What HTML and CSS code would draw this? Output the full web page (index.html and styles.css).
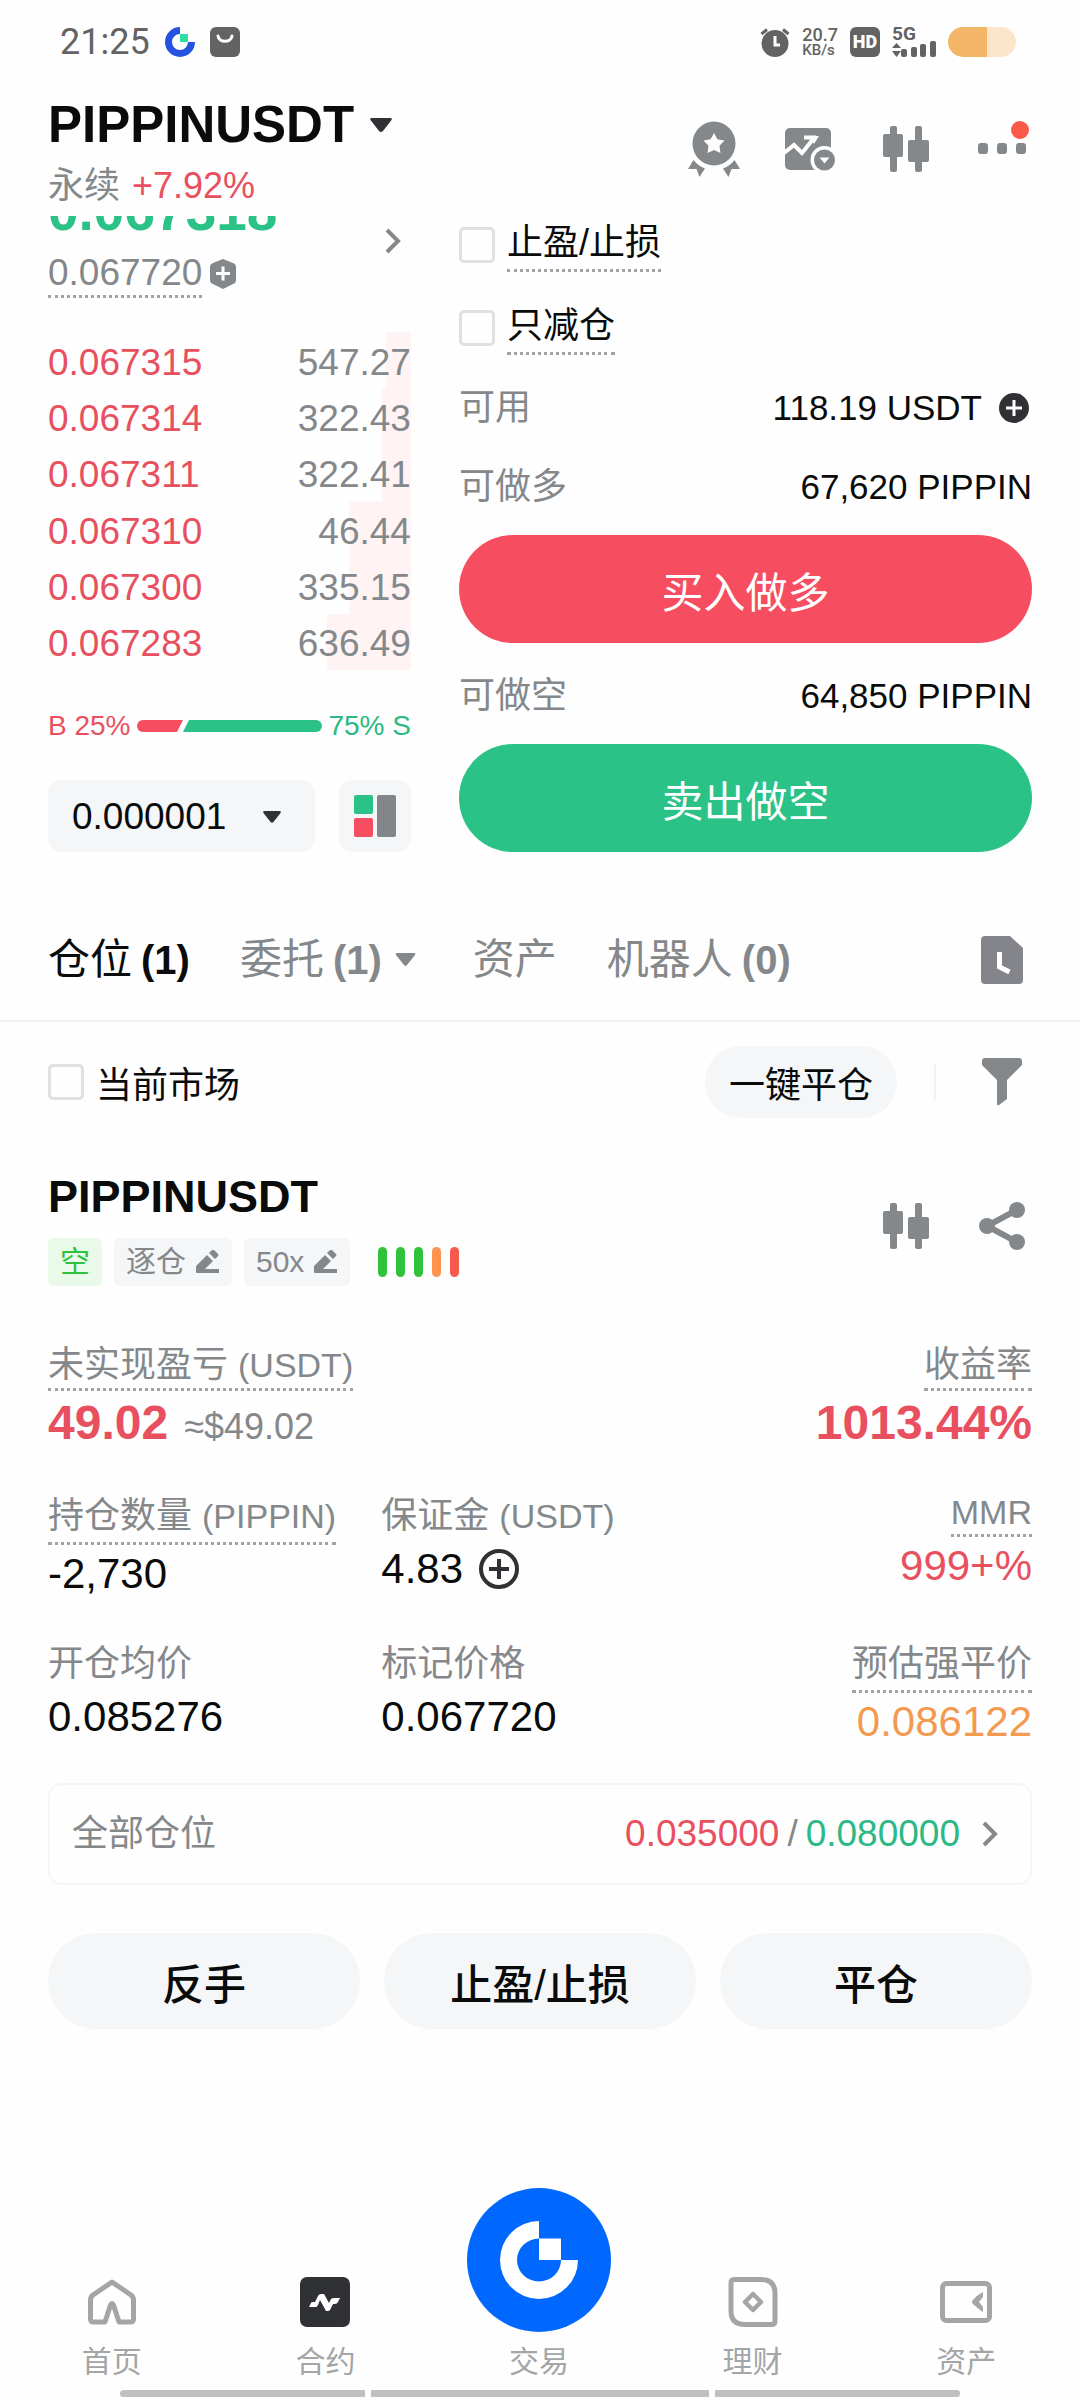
FILE: index.html
```html
<!DOCTYPE html>
<html lang="zh-CN">

<head>
    <meta charset="UTF-8" />
    <meta name="viewport" content="width=device-width, initial-scale=1.0" />
    <link rel="stylesheet" href="styles.css">
    <title>PIPPINUSDT 永续</title>
</head>

<body>
    <div class="page">
        <div class="status-bar">
            <div class="status-left">
                <span class="time">21:25</span>
                <svg width="30" height="30" viewBox="0 0 30 30">
                    <path d="M15 0A15 15 0 1 0 30 15H23A8 8 0 1 1 15 7Z" fill="#2553e0" />
                    <path d="M15 7h8v8h-8z" fill="#2be0a0" />
                </svg>
                <svg width="30" height="30" viewBox="0 0 30 30">
                    <rect width="30" height="30" rx="6" fill="#636363" />
                    <path d="M8 9c1 7 13 7 14 0" fill="none" stroke="#fff" stroke-width="3" stroke-linecap="round" />
                </svg>
            </div>
            <div class="status-right">
                <svg width="30" height="30" viewBox="0 0 30 30">
                    <circle cx="15" cy="16.500" r="13.500" fill="#636363" />
                    <path d="M1.500 7L7 2.500M28.500 7L23 2.500" stroke="#636363" stroke-width="3" />
                    <path d="M15 9v9h5" fill="none" stroke="#fff" stroke-width="3" />
                </svg>
                <div class="net-speed">
                    <span class="net-value">20.7</span>
                    <span class="net-unit">KB/s</span>
                </div>
                <span class="hd">HD</span>
                <div class="signal">
                    <span class="signal-type">5G</span>
                    <svg width="44" height="30" viewBox="0 0 44 30" fill="#636363">
                        <path d="M0 21l4.500-5 4.500 5zM0 24l4.500 6 4.500-6z" />
                        <rect x="9" y="22" width="6" height="8" rx="2" />
                        <rect x="19" y="20" width="6" height="10" rx="2" />
                        <rect x="28" y="17" width="6" height="13" rx="2" />
                        <rect x="38" y="14" width="6" height="16" rx="2" />
                    </svg>
                </div>
                <div class="battery"></div>
            </div>
        </div>

        <header class="header">
            <div class="pair">
                <button type="button" class="pair-name">PIPPINUSDT
                    <svg width="24" height="16" viewBox="0 0 24 16"><path d="M2.500 1h19q2 0 1 2L14 14q-2 2-4 0L1.500 3q-1-2 1-2z" fill="#303135" /></svg>
                </button>
                <div class="pair-info"><span>永续</span><span class="red">+7.92%</span></div>
            </div>
            <div class="header-actions">
                <button type="button" class="icon-btn" aria-label="活动">
                    <svg width="54" height="56" viewBox="0 0 54 56" fill="#84888b">
                        <path fill-rule="evenodd" d="M27 0.500a21.500 22 0 1 1 0 44a21.500 22 0 1 1 0-44zM27 12l3.400 6.300 7.100 1.300-5 5.200.9 7.200-6.400-3.100-6.400 3.100.9-7.200-5-5.200 7.100-1.300z" />
                        <path d="M6.500 39Q11 45 18 47.500L12.500 56l-3-8L1 48zM47.500 39Q43 45 36 47.500L41.500 56l3-8L53 48z" />
                    </svg>
                </button>
                <button type="button" class="icon-btn" aria-label="行情">
                    <svg width="52" height="44" viewBox="0 0 52 44">
                        <rect x="1" y="1" width="46" height="42" rx="5" fill="#84888b" />
                        <path d="M0 26l10-8 8 8 12-15M20 10.500h12" fill="none" stroke="#fff" stroke-width="4" />
                        <path d="M26 9h9l-5 8z" fill="#fff" />
                        <circle cx="40.500" cy="33" r="14" fill="#fefefe" />
                        <circle cx="40.500" cy="33" r="10.500" fill="#84888b" />
                        <path d="M35.500 30.500h10l-5 6z" fill="#fff" />
                    </svg>
                </button>
                <button type="button" class="icon-btn" aria-label="K线">
                    <svg width="46" height="46" viewBox="0 0 46 46" fill="#84888b">
                        <rect x="7" width="7" height="46" rx="2" />
                        <rect y="8" width="20" height="23" rx="2" />
                        <rect x="32" width="7" height="46" rx="2" />
                        <rect x="25" y="14" width="21" height="22" rx="2" />
                    </svg>
                </button>
                <button type="button" class="icon-btn more" aria-label="更多">
                    <svg width="48" height="12" viewBox="0 0 48 12" fill="#84888b">
                        <rect width="10" height="11" rx="3" />
                        <rect x="19" width="10" height="11" rx="3" />
                        <rect x="38" width="10" height="11" rx="3" />
                    </svg>
                    <span class="dot"></span>
                </button>
            </div>
        </header>

        <main>
            <section class="trade">
                <div class="order-book">
                    <div class="quote">
                        <div>
                            <div class="last-price">0.067318</div>
                            <div class="mark-price">
                                <span class="dotted">0.067720</span>
                                <svg width="26" height="30" viewBox="0 0 26 30">
                                    <path d="M13 0l10 4q3 1 3 4v13q0 3-3 4l-10 5-10-5q-3-1-3-4V8q0-3 3-4z" fill="#84888b" />
                                    <path d="M13 7.500v14M6 14.500h14" stroke="#fff" stroke-width="3" />
                                </svg>
                            </div>
                        </div>
                        <svg class="chevron" width="16" height="26" viewBox="0 0 16 26"><path d="M2 2l11 11L2 24" /></svg>
                    </div>
                    <div class="book-rows">
                        <div class="book-row"><i class="depth" style="width: 7%"></i><span class="red">0.067315</span><span>547.27</span></div>
                        <div class="book-row"><i class="depth" style="width: 8%"></i><span class="red">0.067314</span><span>322.43</span></div>
                        <div class="book-row"><i class="depth" style="width: 8%"></i><span class="red">0.067311</span><span>322.41</span></div>
                        <div class="book-row"><i class="depth" style="width: 17%"></i><span class="red">0.067310</span><span>46.44</span></div>
                        <div class="book-row"><i class="depth" style="width: 17%"></i><span class="red">0.067300</span><span>335.15</span></div>
                        <div class="book-row"><i class="depth" style="width: 23%"></i><span class="red">0.067283</span><span>636.49</span></div>
                    </div>
                    <div class="ratio">
                        <span class="red">B 25%</span>
                        <div class="ratio-bar">
                            <i class="buy" style="width: 25%"></i>
                            <i class="sell" style="width: 75%"></i>
                        </div>
                        <span class="green">75% S</span>
                    </div>
                    <div class="book-tools">
                        <div class="precision">
                            <select aria-label="价格精度">
                                <option>0.000001</option>
                            </select>
                            <svg width="18" height="12" viewBox="0 0 18 12"><path d="M1.500 0h15q2 0 1 2l-7 9q-1.500 1.500-3 0l-7-9q-1-2 1-2z" fill="#303135" /></svg>
                        </div>
                        <button type="button" class="layout-btn" aria-label="盘口样式">
                            <svg width="42" height="42" viewBox="0 0 42 42">
                                <rect width="19" height="19" rx="2" fill="#2bc287" />
                                <rect y="23" width="19" height="19" rx="2" fill="#f74d60" />
                                <rect x="23" width="19" height="42" rx="2" fill="#84858a" />
                            </svg>
                        </button>
                    </div>
                </div>

                <form class="order-form">
                    <div class="check-row">
                        <input type="checkbox" id="tpsl" />
                        <label for="tpsl" class="dotted">止盈/止损</label>
                    </div>
                    <div class="check-row">
                        <input type="checkbox" id="reduce" />
                        <label for="reduce" class="dotted">只减仓</label>
                    </div>
                    <div class="info-row">
                        <span>可用</span>
                        <span class="info-value">118.19 USDT
                            <svg width="34" height="30" viewBox="0 0 34 30">
                                <circle cx="16" cy="15" r="15" fill="#303135" />
                                <path d="M16 7v16M8 15h16" stroke="#fff" stroke-width="3" />
                            </svg>
                        </span>
                    </div>
                    <div class="info-row">
                        <span>可做多</span>
                        <span class="info-value">67,620 PIPPIN</span>
                    </div>
                    <button type="button" class="order-btn long">买入做多</button>
                    <div class="info-row">
                        <span>可做空</span>
                        <span class="info-value">64,850 PIPPIN</span>
                    </div>
                    <button type="button" class="order-btn short">卖出做空</button>
                </form>
            </section>

            <nav class="tabs">
                <button type="button" class="tab active">仓位<b>(1)</b></button>
                <button type="button" class="tab">委托<b>(1)</b>
                    <svg width="32" height="14" viewBox="0 0 32 14"><path d="M6 0h17q2 0 1 2l-8 10q-1.500 2-3 0L5 2q-1-2 1-2z" fill="#84888b" /></svg>
                </button>
                <button type="button" class="tab">资产</button>
                <button type="button" class="tab">机器人<b>(0)</b></button>
                <button type="button" class="history" aria-label="历史">
                    <svg width="42" height="48" viewBox="0 0 42 48">
                        <path d="M4 0h25l13 12v32q0 4-4 4H4q-4 0-4-4V4q0-4 4-4z" fill="#84858a" />
                        <path d="M18.500 16v15l10 5" fill="none" stroke="#fff" stroke-width="5" />
                    </svg>
                </button>
            </nav>

            <div class="filter-bar">
                <input type="checkbox" id="current" />
                <label for="current">当前市场</label>
                <button type="button" class="close-all">一键平仓</button>
                <span class="divider"></span>
                <button type="button" class="filter-btn" aria-label="筛选">
                    <svg width="40" height="48" viewBox="0 0 40 48"><path d="M3 0h34q3 0 3 3v4L25 22v19l-8 6q-2 1-2-1V22L0 7V3q0-3 3-3z" fill="#84888b" /></svg>
                </button>
            </div>

            <section class="position">
                <div class="position-head">
                    <div>
                        <h2>PIPPINUSDT</h2>
                        <div class="tags">
                            <span class="tag side">空</span>
                            <button type="button" class="tag">逐仓
                                <svg width="24" height="24" viewBox="0 0 24 24" fill="#84888b"><path d="M0 22v-6L11 5l6 6-8 8h14v4H1q-1 0-1-1zM13 3l3-3q1-1 2 0l4 4q1 1 0 2l-3 3z" /></svg>
                            </button>
                            <button type="button" class="tag">50x
                                <svg width="24" height="24" viewBox="0 0 24 24" fill="#84888b"><path d="M0 22v-6L11 5l6 6-8 8h14v4H1q-1 0-1-1zM13 3l3-3q1-1 2 0l4 4q1 1 0 2l-3 3z" /></svg>
                            </button>
                            <svg width="82" height="30" viewBox="0 0 82 30">
                                <rect width="9" height="30" rx="4.500" fill="#2fc23a" />
                                <rect x="18" width="9" height="30" rx="4.500" fill="#2fc23a" />
                                <rect x="36" width="9" height="30" rx="4.500" fill="#2fc23a" />
                                <rect x="54" width="9" height="30" rx="4.500" fill="#ff924d" />
                                <rect x="72" width="9" height="30" rx="4.500" fill="#f65a4c" />
                            </svg>
                        </div>
                    </div>
                    <div class="position-actions">
                        <button type="button" class="icon-btn" aria-label="K线">
                            <svg width="46" height="46" viewBox="0 0 46 46" fill="#84888b">
                                <rect x="7" width="7" height="46" rx="2" />
                                <rect y="8" width="20" height="23" rx="2" />
                                <rect x="32" width="7" height="46" rx="2" />
                                <rect x="25" y="14" width="21" height="22" rx="2" />
                            </svg>
                        </button>
                        <button type="button" class="icon-btn" aria-label="分享">
                            <svg width="46" height="48" viewBox="0 0 46 48" fill="#84888b">
                                <path d="M38 8L8 24l30 16" fill="none" stroke="#84888b" stroke-width="6" />
                                <circle cx="38" cy="8" r="8" />
                                <circle cx="8" cy="24" r="8" />
                                <circle cx="38" cy="40" r="8" />
                            </svg>
                        </button>
                    </div>
                </div>

                <div class="summary">
                    <div class="field">
                        <span class="label dotted">未实现盈亏 <small>(USDT)</small></span>
                        <span class="value red">49.02<span class="approx">≈$49.02</span></span>
                    </div>
                    <div class="field right">
                        <span class="label dotted">收益率</span>
                        <span class="value red">1013.44%</span>
                    </div>
                </div>
                <div class="fields">
                    <div class="field">
                        <span class="label dotted">持仓数量 <small>(PIPPIN)</small></span>
                        <span class="value">-2,730</span>
                    </div>
                    <div class="field">
                        <span class="label">保证金 <small>(USDT)</small></span>
                        <span class="value">4.83
                            <svg width="40" height="40" viewBox="0 0 40 40" fill="none" stroke="#303135" stroke-width="4">
                                <circle cx="20" cy="20" r="18" />
                                <path d="M20 10v20M10 20h20" />
                            </svg>
                        </span>
                    </div>
                    <div class="field right">
                        <span class="label latin dotted">MMR</span>
                        <span class="value red">999+%</span>
                    </div>
                    <div class="field">
                        <span class="label">开仓均价</span>
                        <span class="value">0.085276</span>
                    </div>
                    <div class="field">
                        <span class="label">标记价格</span>
                        <span class="value">0.067720</span>
                    </div>
                    <div class="field right">
                        <span class="label dotted">预估强平价</span>
                        <span class="value orange">0.086122</span>
                    </div>
                </div>

                <button type="button" class="tpsl-card">
                    <span class="tpsl-name">全部仓位</span>
                    <span class="red">0.035000</span>
                    <span class="slash">/</span>
                    <span class="green">0.080000</span>
                    <svg class="chevron" width="16" height="26" viewBox="0 0 16 26"><path d="M2 2l11 11L2 24" /></svg>
                </button>

                <div class="actions">
                    <button type="button">反手</button>
                    <button type="button">止盈/止损</button>
                    <button type="button">平仓</button>
                </div>
            </section>
        </main>

        <footer class="footer">
            <nav class="bottom-nav">
                <a href="#">
                    <span class="nav-icon">
                        <svg width="48" height="50" viewBox="0 0 48 50" fill="none" stroke="#a3a5a7" stroke-width="5" stroke-linejoin="round">
                            <path d="M24 5L5 18Q2.500 20 2.500 23v19q0 3 3 3H17l5.500-17q1.500-3 3 0L31 45h11.500q3 0 3-3V23q0-3-2.500-5z" />
                        </svg>
                    </span>
                    首页
                </a>
                <a href="#">
                    <span class="nav-icon">
                        <svg width="50" height="50" viewBox="0 0 50 50">
                            <rect width="50" height="50" rx="7" fill="#303135" />
                            <path d="M9 30l2-4q0-1 2-1h2l3-6q1-2 3-2h3l5 9 2-4q1-1 3-1h6l-2 4q-1 2-3 2h-2l-3 6q-1 1-2 1h-2l-6-11-2 5q-1 2-2 2z" fill="#fff" />
                        </svg>
                    </span>
                    合约
                </a>
                <a href="#">
                    <span class="nav-icon">
                        <svg width="144" height="144" viewBox="0 0 144 144">
                            <circle cx="72" cy="72" r="72" fill="#0068ff" />
                            <path d="M72 33A39 39 0 1 0 111 72H94A22 21.500 0 1 1 72 50.500Z" fill="#fff" />
                            <path d="M72 50.500h22V72H72z" fill="#fff" />
                        </svg>
                    </span>
                    交易
                </a>
                <a href="#">
                    <span class="nav-icon">
                        <svg width="50" height="50" viewBox="0 0 50 50" fill="none" stroke="#a3a5a7" stroke-width="5" stroke-linejoin="round">
                            <path d="M6 2.500h27Q47 2.500 47 16v28q0 3.500-3.500 3.500H17Q3 47.500 3 34V6q0-3.500 3-3.500z" />
                            <path d="M25 17l8 8-8 8-8-8z" stroke-width="4.500" />
                        </svg>
                    </span>
                    理财
                </a>
                <a href="#">
                    <span class="nav-icon">
                        <svg width="52" height="44" viewBox="0 0 52 44">
                            <rect x="2.500" y="3.500" width="47" height="37" rx="4" fill="none" stroke="#a3a5a7" stroke-width="5" />
                            <path d="M43 12v5l-4 5 4 5v5q-6-4-10-8-2-2 0-4 4-5 10-8z" fill="#a3a5a7" />
                        </svg>
                    </span>
                    资产
                </a>
            </nav>
            <div class="home-bar"><i></i><i></i><i></i></div>
        </footer>
    </div>
</body>

</html>
```

FILE: styles.css
```css
* {
    margin: 0;
    padding: 0;
    box-sizing: border-box;
}

body {
    background-color: #fefefe;
    color: #0a0b0b;
    font-family: "Liberation Sans", "Noto Sans CJK SC", sans-serif;
    font-size: 36px;
}

button,
select {
    font: inherit;
    color: inherit;
    background: none;
    border: none;
    cursor: pointer;
}

svg {
    display: block;
    flex: none;
}

.page {
    display: flex;
    flex-direction: column;
    min-height: 100vh;
}

.red {
    color: #e8505f;
}

.green {
    color: #2bb985;
}

.orange {
    color: #f39a50;
}

.dotted {
    border-bottom: 3px dotted #a0a2a4;
}

.chevron path {
    fill: none;
    stroke: #84888b;
    stroke-width: 4;
}

/* status bar */
.status-bar {
    display: flex;
    justify-content: space-between;
    align-items: center;
    height: 84px;
    padding: 0 64px 0 60px;
    font-family: Roboto, sans-serif;
    color: #636363;
}

.status-left {
    display: flex;
    align-items: center;
    gap: 15px;
}

.status-right {
    display: flex;
    align-items: center;
    gap: 12px;
}

.net-speed {
    display: flex;
    flex-direction: column;
    font-weight: 500;
}

.net-value {
    font-size: 18px;
    line-height: 16px;
}

.net-unit {
    font-size: 15px;
    line-height: 14px;
}

.hd {
    width: 30px;
    border-radius: 6px;
    background-color: #636363;
    color: #fff;
    font-size: 18px;
    font-weight: 900;
    line-height: 30px;
    text-align: center;
}

.signal {
    position: relative;
}

.signal-type {
    position: absolute;
    top: 0;
    left: 0;
    font-size: 19px;
    font-weight: 700;
    line-height: 14px;
}

.battery {
    width: 68px;
    height: 30px;
    border-radius: 15px;
    background: linear-gradient(to right, #f3b568 58%, #fce5ca 58%);
}

/* header */
.header {
    display: flex;
    justify-content: space-between;
    align-items: flex-start;
    padding: 11px 48px 6px;
}

.pair-name {
    display: flex;
    align-items: center;
    gap: 15px;
    font-size: 51px;
    font-weight: 700;
    line-height: 60px;
}

.pair-info {
    display: flex;
    gap: 12px;
    margin-top: 7px;
    line-height: 48px;
    color: #84888b;
}

.header-actions,
.position-actions {
    display: flex;
    gap: 36px;
}

.header-actions {
    padding-top: 24px;
}

.position-actions {
    padding-bottom: 4px;
}

.icon-btn {
    display: flex;
    justify-content: center;
    align-items: center;
    width: 60px;
    height: 60px;
}

.more {
    position: relative;
}

.dot {
    position: absolute;
    top: 2px;
    right: 3px;
    width: 18px;
    height: 18px;
    border-radius: 50%;
    background-color: #fb594a;
}

/* order book and order form */
.trade {
    display: grid;
    grid-template-columns: 19fr 30fr;
    gap: 48px;
    padding: 0 48px;
    overflow: hidden;
}

.quote {
    display: flex;
    justify-content: space-between;
    align-items: center;
    margin-top: -32px;
    padding-right: 10px;
}

.last-price {
    color: #2bc287;
    font-size: 55px;
    font-weight: 700;
    line-height: 54px;
}

.mark-price {
    display: flex;
    align-items: center;
    gap: 8px;
    margin-top: 12px;
    font-size: 37px;
    line-height: 45px;
    color: #84888b;
}

.book-rows {
    display: grid;
    grid-auto-rows: 1fr;
    height: 338px;
    margin-top: 34px;
    font-size: 37px;
    color: #84888b;
}

.book-row {
    position: relative;
    display: flex;
    justify-content: space-between;
    align-items: center;
    padding-top: 5px;
}

.book-row span {
    position: relative;
}

.depth {
    position: absolute;
    top: 0;
    right: 0;
    bottom: 0;
    background-color: #fff4f3;
}

.ratio {
    display: flex;
    align-items: center;
    gap: 6px;
    margin-top: 39px;
    font-size: 28px;
    line-height: 34px;
}

.ratio-bar {
    display: flex;
    flex: 1;
    height: 12px;
}

.buy {
    background-color: #f74d60;
    border-radius: 6px 0 0 6px;
    clip-path: polygon(0 0, 100% 0, calc(100% - 6px) 100%, 0 100%);
}

.sell {
    margin-left: -1px;
    background-color: #2bc287;
    border-radius: 0 6px 6px 0;
    clip-path: polygon(6px 0, 100% 0, 100% 100%, 0 100%);
}

.ratio-bar .sell {
    margin-left: 0;
}

.book-tools {
    display: flex;
    gap: 24px;
    margin-top: 37px;
}

.precision {
    position: relative;
    flex: 1;
}

.precision select {
    width: 100%;
    height: 72px;
    padding-left: 24px;
    border-radius: 14px;
    background-color: #f5f6f8;
    font-size: 37px;
    appearance: none;
}

.precision svg {
    position: absolute;
    top: 31px;
    right: 34px;
    pointer-events: none;
}

.layout-btn {
    display: flex;
    justify-content: center;
    align-items: center;
    width: 72px;
    height: 72px;
    border-radius: 14px;
    background-color: #f5f6f8;
}

input[type="checkbox"] {
    width: 36px;
    height: 36px;
    border: 3px solid #e0e0e0;
    border-radius: 5px;
    appearance: none;
}

.check-row {
    display: flex;
    align-items: center;
    gap: 12px;
    margin: 1px 0 28px;
    line-height: 52px;
}

.info-row {
    display: flex;
    justify-content: space-between;
    margin-bottom: 29px;
    line-height: 50px;
    color: #84888b;
}

.info-value {
    display: flex;
    align-items: center;
    gap: 16px;
    font-size: 35px;
    color: #0a0b0b;
}

.order-btn {
    width: 100%;
    height: 108px;
    margin: -6px 0 28px;
    border-radius: 54px;
    color: #fff;
    font-size: 42px;
}

.long {
    background-color: #f74d60;
}

.short {
    margin-bottom: 0;
    background-color: #2bc287;
}

/* tabs */
.tabs {
    display: flex;
    align-items: center;
    gap: 50px;
    margin-top: 78px;
    padding: 0 57px 30px 48px;
    border-bottom: 2px solid #f2f2f3;
}

.tab {
    display: flex;
    align-items: center;
    gap: 9px;
    font-size: 42px;
    line-height: 60px;
    color: #84888b;
}

.tab b {
    font-size: 40px;
}

.tab.active {
    color: #0a0b0b;
}

.history {
    margin-left: auto;
}

.filter-bar {
    display: flex;
    align-items: center;
    padding: 24px 58px 0 48px;
}

.filter-bar label {
    margin-left: 12px;
}

.close-all {
    height: 72px;
    margin-left: auto;
    padding: 0 24px;
    border-radius: 36px;
    background-color: #f5f6f8;
}

.divider {
    width: 2px;
    height: 36px;
    margin: 0 46px 0 37px;
    background-color: #f2f2f3;
}

/* position card */
.position {
    padding: 51px 48px 0;
}

.position-head {
    display: flex;
    justify-content: space-between;
    align-items: center;
}

.position-head h2 {
    font-size: 45px;
    line-height: 56px;
}

.tags {
    display: flex;
    align-items: center;
    gap: 12px;
    margin-top: 13px;
}

.tags > svg {
    margin-left: 16px;
}

.tag {
    display: flex;
    align-items: center;
    gap: 10px;
    padding: 0 12px;
    border-radius: 6px;
    background-color: #f5f6f8;
    color: #84888b;
    font-size: 30px;
    line-height: 48px;
}

.side {
    background-color: #eafaea;
    color: #2fc23a;
}

.field {
    display: flex;
    flex-direction: column;
    align-items: flex-start;
    gap: 2px;
}

.field.right {
    align-items: flex-end;
}

.label {
    line-height: 52px;
    color: #84888b;
}

.label small {
    font-size: 34px;
}

.label.dotted {
    margin-bottom: 2px;
}

.label.latin {
    font-size: 34px;
    line-height: 44px;
}

.value {
    display: flex;
    align-items: center;
    gap: 16px;
    font-size: 42px;
    line-height: 50px;
}

.summary {
    display: flex;
    justify-content: space-between;
    margin: 56px 0 35px;
}

.summary .label {
    line-height: 46px;
}

.summary .value {
    align-items: baseline;
    font-size: 48px;
    font-weight: 700;
    line-height: 56px;
}

.approx {
    font-size: 36px;
    font-weight: 400;
    color: #84888b;
}

.fields {
    display: grid;
    grid-template-columns: repeat(3, 1fr);
    gap: 39px 16px;
}

.tpsl-card {
    display: flex;
    align-items: center;
    gap: 8px;
    width: 100%;
    height: 102px;
    margin-top: 36px;
    padding: 0 32px 0 22px;
    border: 2px solid #f5f5f6;
    border-radius: 14px;
    font-size: 37px;
}

.tpsl-name {
    margin-right: auto;
    color: #84888b;
    font-size: 36px;
    line-height: 48px;
}

.slash {
    color: #84888b;
}

.tpsl-card .chevron {
    margin-left: 14px;
}

.actions {
    display: flex;
    gap: 24px;
    margin: 48px 0;
}

.actions button {
    flex: 1;
    height: 96px;
    border-radius: 48px;
    background-color: #f5f6f8;
    font-size: 42px;
    font-weight: 500;
}

/* bottom navigation */
.footer {
    margin-top: auto;
}

.bottom-nav {
    display: grid;
    grid-template-columns: repeat(5, 1fr);
    align-items: end;
    padding: 0 7px 0 5px;
}

.bottom-nav a {
    display: flex;
    flex-direction: column;
    align-items: center;
    gap: 8px;
    color: #a3a5a7;
    font-size: 30px;
    line-height: 44px;
    text-decoration: none;
}

.nav-icon {
    display: flex;
    align-items: center;
    min-height: 60px;
}

.home-bar {
    display: grid;
    grid-template-columns: 245fr 338fr 245fr;
    gap: 6px;
    padding: 6px 120px 3px;
}

.home-bar i {
    height: 7px;
    background-color: #c0c0c0;
}

.home-bar i:first-child {
    border-radius: 4px 0 0 4px;
}

.home-bar i:last-child {
    border-radius: 0 4px 4px 0;
}
```
